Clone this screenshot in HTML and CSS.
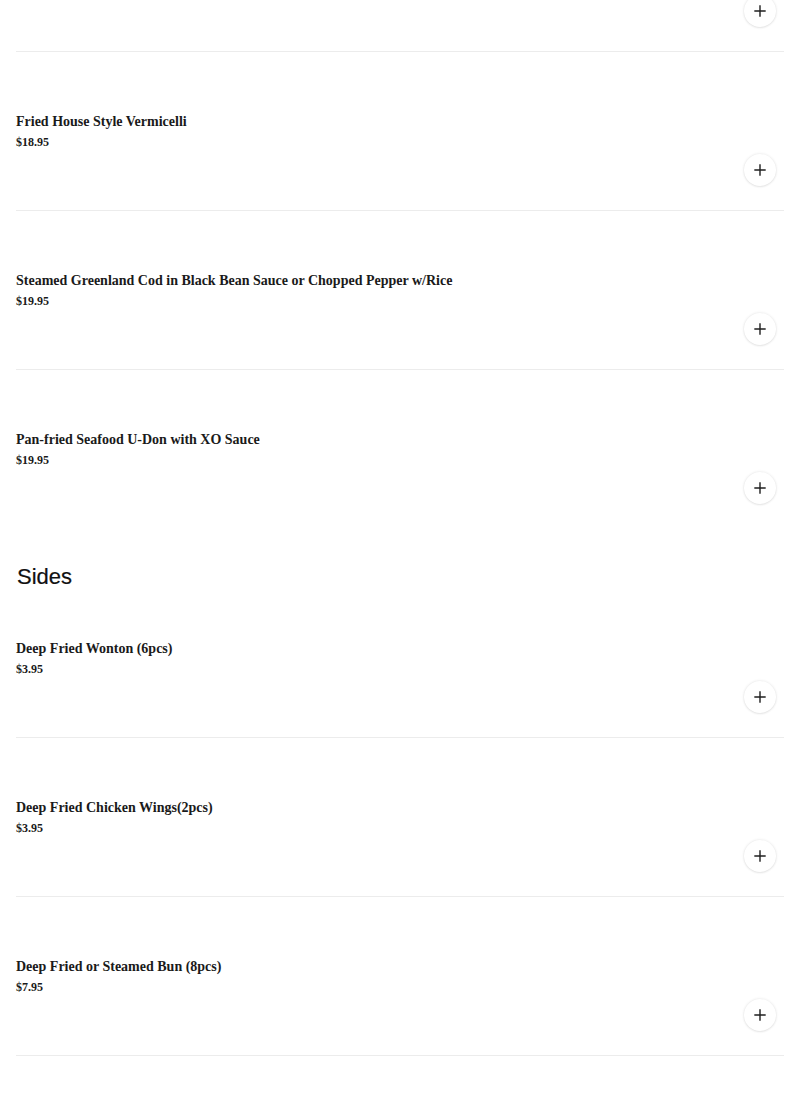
FILE: index.html
```html
<!DOCTYPE html>
<html lang="en">
<head>
<meta charset="utf-8">
<title>Menu</title>
<link rel="stylesheet" href="styles.css">
</head>
<body>
<main class="menu">
  <section class="section">
    <div class="item item-cut">
      <div class="item-actions"><button class="add-btn add-btn-cut" aria-label="Add"><svg viewBox="0 0 16 16" width="14" height="14"><path d="M8 1.5v13M1.5 8h13" stroke="#1f1f1f" stroke-width="1.6" fill="none"/></svg></button></div>
    </div>
    <div class="item">
      <div class="item-name">Fried House Style Vermicelli</div>
      <div class="item-price">$18.95</div>
      <div class="item-actions"><button class="add-btn" aria-label="Add"><svg viewBox="0 0 16 16" width="14" height="14"><path d="M8 1.5v13M1.5 8h13" stroke="#1f1f1f" stroke-width="1.6" fill="none"/></svg></button></div>
    </div>
    <div class="item">
      <div class="item-name">Steamed Greenland Cod in Black Bean Sauce or Chopped Pepper w/Rice</div>
      <div class="item-price">$19.95</div>
      <div class="item-actions"><button class="add-btn" aria-label="Add"><svg viewBox="0 0 16 16" width="14" height="14"><path d="M8 1.5v13M1.5 8h13" stroke="#1f1f1f" stroke-width="1.6" fill="none"/></svg></button></div>
    </div>
    <div class="item item-last">
      <div class="item-name">Pan-fried Seafood U-Don with XO Sauce</div>
      <div class="item-price">$19.95</div>
      <div class="item-actions"><button class="add-btn" aria-label="Add"><svg viewBox="0 0 16 16" width="14" height="14"><path d="M8 1.5v13M1.5 8h13" stroke="#1f1f1f" stroke-width="1.6" fill="none"/></svg></button></div>
    </div>
  </section>
  <section class="section">
    <h2 class="section-title">Sides</h2>
    <div class="item item-first">
      <div class="item-name">Deep Fried Wonton (6pcs)</div>
      <div class="item-price">$3.95</div>
      <div class="item-actions"><button class="add-btn" aria-label="Add"><svg viewBox="0 0 16 16" width="14" height="14"><path d="M8 1.5v13M1.5 8h13" stroke="#1f1f1f" stroke-width="1.6" fill="none"/></svg></button></div>
    </div>
    <div class="item">
      <div class="item-name">Deep Fried Chicken Wings(2pcs)</div>
      <div class="item-price">$3.95</div>
      <div class="item-actions"><button class="add-btn" aria-label="Add"><svg viewBox="0 0 16 16" width="14" height="14"><path d="M8 1.5v13M1.5 8h13" stroke="#1f1f1f" stroke-width="1.6" fill="none"/></svg></button></div>
    </div>
    <div class="item">
      <div class="item-name">Deep Fried or Steamed Bun (8pcs)</div>
      <div class="item-price">$7.95</div>
      <div class="item-actions"><button class="add-btn" aria-label="Add"><svg viewBox="0 0 16 16" width="14" height="14"><path d="M8 1.5v13M1.5 8h13" stroke="#1f1f1f" stroke-width="1.6" fill="none"/></svg></button></div>
    </div>
  </section>
</main>
</body>
</html>
```

FILE: styles.css
```css
* { box-sizing: border-box; }
html, body { margin: 0; padding: 0; background: #fff; }
body { font-family: "Liberation Serif", "Times New Roman", serif; color: #1a1a1a; overflow: hidden; }
.menu { padding: 0 16px; }
.section { display: flex; flex-direction: column; }
.item {
  display: flex;
  flex-direction: column;
  padding: 60px 0 24px 0;
  border-bottom: 1px solid #ececec;
}
.item-cut { padding: 0 0 24px 0; height: 52px; }
.item-last { border-bottom: none; }
.item-first { padding-top: 50px; }
.item-name { font-size: 14px; font-weight: 700; line-height: 20px; }
.item-price { font-size: 12px; font-weight: 700; line-height: 16px; margin-top: 2px; }
.item-actions { display: flex; justify-content: flex-end; padding-right: 8px; margin-top: 4px; }
.item-cut .item-actions { margin-top: 0; }
.add-btn {
  width: 32px; height: 32px;
  border-radius: 50%;
  border: none;
  background: #fff;
  box-shadow: 0 0 3px rgba(0,0,0,0.12), 0 1px 2px rgba(0,0,0,0.06);
  display: flex; align-items: center; justify-content: center;
  padding: 0;
}
.add-btn-cut { margin-top: -5px; }
.section-title {
  font-family: "Liberation Sans", Arial, sans-serif;
  font-weight: 400;
  font-size: 22px;
  line-height: 24px;
  margin: 37px 0 0 1px;
  color: #111;
  -webkit-text-stroke: 0.2px #111;
}
```
